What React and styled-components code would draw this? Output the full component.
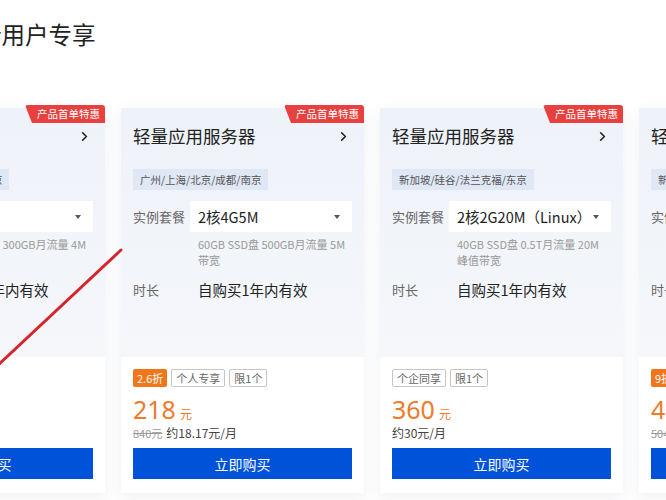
import React from 'react';
import styled, { createGlobalStyle } from 'styled-components';
import { ChevronRight } from 'lucide-react';

const GlobalStyle = createGlobalStyle`
  body {
    margin: 0;
    background: #ffffff;
    font-family: "Noto Sans CJK SC", "Noto Sans", sans-serif;
    color: #222;
  }
  * { box-sizing: border-box; }
`;

const products = [
  {
    region: '广州/上海/北京/成都/南京',
    spec: '2核2G4M',
    desc: '50GB SSD盘 300GB月流量 4M 带宽',
    tags: [{ text: '个企同享' }, { text: '限1个' }],
    price: '108',
    monthly: '约9元/月',
  },
  {
    region: '广州/上海/北京/成都/南京',
    spec: '2核4G5M',
    desc: '60GB SSD盘 500GB月流量 5M 带宽',
    tags: [{ text: '2.6折', hot: true }, { text: '个人专享' }, { text: '限1个' }],
    price: '218',
    origin: '840元',
    monthly: '约18.17元/月',
  },
  {
    region: '新加坡/硅谷/法兰克福/东京',
    spec: '2核2G20M（Linux）',
    desc: '40GB SSD盘 0.5T月流量 20M 峰值带宽',
    tags: [{ text: '个企同享' }, { text: '限1个' }],
    price: '360',
    monthly: '约30元/月',
  },
  {
    region: '新加坡/硅谷/法兰克福/东京',
    spec: '2核2G30M',
    desc: '50GB SSD盘 1T月流量 30M 峰值带宽',
    tags: [{ text: '9折', hot: true }, { text: '个人专享' }, { text: '限1个' }],
    price: '453',
    origin: '504元',
    monthly: '约37.75元/月',
  },
];

const App = () => (
  <>
    <GlobalStyle />
    <Page>
      <Heading>新用户专享</Heading>
      <Track>
        {products.map((p, i) => (
          <Card key={i}>
            <Badge>产品首单特惠</Badge>
            <Top>
              <TitleRow>
                <Title>轻量应用服务器</Title>
                <ChevronRight size={15} strokeWidth={2.6} color="#222" />
              </TitleRow>
              <Region>{p.region}</Region>
              <SpecGrid>
                <Label>实例套餐</Label>
                <Select>
                  <span>{p.spec}</span>
                  <Caret />
                </Select>
                <Desc>{p.desc}</Desc>
                <Label $tall>时长</Label>
                <Value>自购买1年内有效</Value>
              </SpecGrid>
            </Top>
            <Bottom>
              <Tags>
                {p.tags.map((t) => (
                  <Tag key={t.text} $hot={t.hot}>{t.text}</Tag>
                ))}
              </Tags>
              <PriceRow>
                <Price>{p.price}</Price>
                <Unit>元</Unit>
              </PriceRow>
              <SubLine>
                {p.origin && <Origin>{p.origin}</Origin>}
                {p.monthly}
              </SubLine>
              <BuyButton>立即购买</BuyButton>
            </Bottom>
          </Card>
        ))}
      </Track>
      <Mark viewBox="0 0 666 500">
        <line x1="121" y1="250" x2="-4" y2="367" stroke="#d4262d" strokeWidth="3" strokeLinecap="round" />
      </Mark>
    </Page>
  </>
);

export default App;

const Page = styled.div`
  position: relative;
  width: 666px;
  height: 500px;
  overflow: hidden;
`;

const Heading = styled.h2`
  margin: 0 0 0 -22px;
  padding-top: 20px;
  font-size: 23.5px;
  line-height: 28px;
  font-weight: 400;
  color: #222;
  white-space: nowrap;
`;

const Track = styled.div`
  display: flex;
  gap: 16px;
  margin: 60px 0 0 -138px;
`;

const Card = styled.div`
  position: relative;
  flex: 0 0 243px;
  height: 385px;
  display: flex;
  flex-direction: column;
  background: #fff;
  box-shadow: 0 4px 14px rgba(40, 60, 100, 0.08);
`;

const Badge = styled.div`
  position: absolute;
  top: -3px;
  right: 0;
  height: 18px;
  padding: 0 5px 0 12px;
  background: #e8403e;
  color: #fff;
  font-size: 10.5px;
  line-height: 18px;
  border-radius: 3px 3px 0 0;
  clip-path: polygon(0 0, 100% 0, 100% 100%, 7px 100%);
`;

const Top = styled.div`
  height: 249px;
  padding: 15px 12px 0;
  background: linear-gradient(180deg, #eef2f9 0%, #f5f7fb 100%);
`;

const TitleRow = styled.div`
  display: flex;
  align-items: center;
  justify-content: space-between;
  height: 26px;
  padding-right: 1px;
`;

const Title = styled.div`
  font-size: 17.5px;
  line-height: 26px;
  color: #222;
`;

const Region = styled.div`
  display: inline-block;
  margin-top: 20px;
  height: 21px;
  padding: 0 7px;
  background: #e0e8f6;
  color: #555;
  font-size: 10.5px;
  line-height: 21px;
  white-space: nowrap;
`;

const SpecGrid = styled.div`
  display: grid;
  grid-template-columns: 57px 1fr;
  margin-top: 11px;
  align-items: center;
`;

const Label = styled.div`
  font-size: 13px;
  color: #666;
  line-height: 24px;
  margin-top: ${(p) => (p.$tall ? '10px' : '0')};
`;

const Select = styled.div`
  display: flex;
  align-items: center;
  justify-content: space-between;
  height: 31px;
  padding: 0 12px 0 8px;
  background: #fff;
  font-size: 14.5px;
  color: #222;
  white-space: nowrap;
`;

const Caret = styled.span`
  width: 0;
  height: 0;
  border-left: 3.5px solid transparent;
  border-right: 3.5px solid transparent;
  border-top: 4px solid #555;
`;

const Desc = styled.div`
  grid-column: 2;
  margin-top: 4px;
  padding-left: 8px;
  font-size: 11px;
  line-height: 16px;
  color: #999;
`;

const Value = styled.div`
  margin-top: 10px;
  padding-left: 8px;
  font-size: 14.5px;
  line-height: 24px;
  color: #222;
`;

const Bottom = styled.div`
  flex: 1;
  display: flex;
  flex-direction: column;
  padding: 12px 12px 14px;
`;

const Tags = styled.div`
  display: flex;
  gap: 4px;
`;

const Tag = styled.span`
  height: 18px;
  padding: 0 4px;
  font-size: 11px;
  line-height: ${(p) => (p.$hot ? '18px' : '16px')};
  color: ${(p) => (p.$hot ? '#fff' : '#666')};
  background: ${(p) => (p.$hot ? '#f27619' : '#fff')};
  border: ${(p) => (p.$hot ? 'none' : '1px solid #c6c6c6')};
  border-radius: 2px;
`;

const PriceRow = styled.div`
  display: flex;
  align-items: baseline;
  margin-top: 7px;
  color: #ee7a2b;
`;

const Price = styled.span`
  font-family: "Noto Sans", "Liberation Sans", sans-serif;
  font-size: 25px;
  line-height: 30px;
`;

const Unit = styled.span`
  margin-left: 4px;
  font-size: 12px;
`;

const SubLine = styled.div`
  margin-top: 1px;
  font-size: 12px;
  line-height: 16px;
  color: #444;
`;

const Origin = styled.span`
  margin-right: 4px;
  font-size: 11px;
  color: #999;
  text-decoration: line-through;
`;

const BuyButton = styled.button`
  margin-top: 7px;
  height: 31px;
  border: none;
  background: #0052d9;
  color: #fff;
  font-family: inherit;
  font-size: 14px;
  cursor: pointer;
`;

const Mark = styled.svg`
  position: absolute;
  left: 0;
  top: 0;
  width: 666px;
  height: 500px;
  pointer-events: none;
`;
